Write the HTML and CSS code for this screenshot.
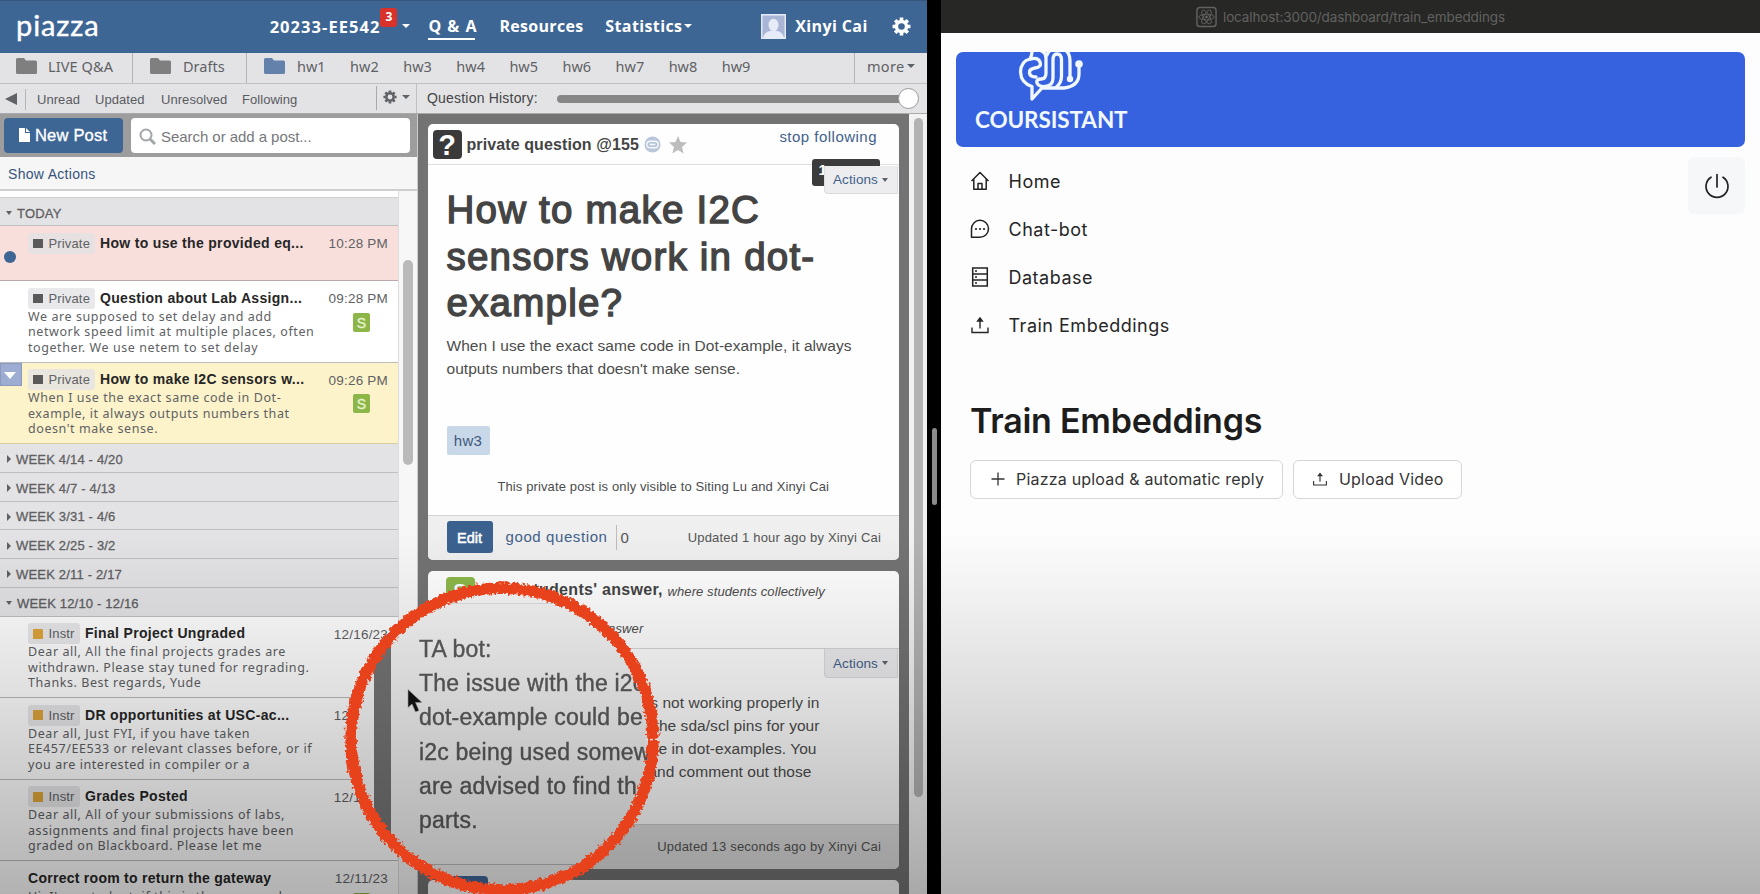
FILE: index.html
```html
<!DOCTYPE html>
<html lang="en">
<head>
<meta charset="utf-8">
<title>Piazza and Coursistant</title>
<link rel="stylesheet" href="styles.css">
</head>
<body>
<svg class="defs" width="0" height="0">
  <symbol id="folder" viewBox="0 0 21 16"><path d="M0 1.5Q0 0 1.5 0H8l2 2.5h9.500Q21 2.500 21 4v10.500Q21 16 19.500 16h-18Q0 16 0 14.500z" fill="currentColor"/></symbol>
  <symbol id="gear" viewBox="0 0 20 20"><g fill="none" stroke="currentColor"><circle cx="10" cy="10" r="5.300" stroke-width="3.600"/><path d="M10 .6v3M10 16.400v3M.6 10h3M16.400 10h3M3.350 3.350l2.200 2.200M14.450 14.450l2.200 2.200M3.350 16.650l2.200-2.200M14.450 5.550l2.200-2.200" stroke-width="3.800"/></g></symbol>
  <symbol id="upload" viewBox="0 0 20 20"><path d="M2 12.500V17.500H18V12.500M10 13.500V4M7.700 6L10 3l2.300 3z" fill="none" stroke="currentColor" stroke-width="1.400"/></symbol>
</svg>
<div class="screen">
  <section class="piazza">
    <header class="topnav">
      <span class="brand">piazza</span>
      <span class="course">20233-EE542</span><span class="badge">3</span><i class="caret c-course"></i>
      <span class="current">Q &amp; A</span>
      <span class="resources">Resources</span>
      <span class="stats">Statistics</span><i class="caret"></i>
      <svg class="avatar" viewBox="0 0 25 25"><path fill="#a9b5d6" stroke="#e4ebf6" stroke-width="1.500" d="M.7.7h23.600v23.600H.7z"/><ellipse cx="12.500" cy="11" rx="5" ry="6.300" fill="#e6ebf7"/><path d="M2 24q1-6 7-7h7q6 1 7 7z" fill="#e6ebf7"/></svg>
      <span class="user">Xinyi Cai</span>
      <svg class="topgear"><use href="#gear"/></svg>
    </header>
    <nav class="folders">
      <div class="folder live"><svg><use href="#folder"/></svg><span>LIVE Q&amp;A</span></div>
      <div class="folder drafts"><svg><use href="#folder"/></svg><span>Drafts</span></div>
      <div class="folder hw"><svg class="blue"><use href="#folder"/></svg><span>hw1</span><span>hw2</span><span>hw3</span><span>hw4</span><span>hw5</span><span>hw6</span><span>hw7</span><span>hw8</span><span>hw9</span></div>
      <div class="folder more">more<i class="caret dark"></i></div>
    </nav>
    <div class="toolbar">
      <div class="filters">
        <i class="back"></i><i class="vr"></i>
        <span class="f1">Unread</span><span class="f2">Updated</span><span class="f3">Unresolved</span><span class="f4">Following</span>
        <div class="filtergear"><svg viewBox="0 0 20 20"><use href="#gear"/></svg><i class="caret dark"></i></div>
      </div>
      <div class="history"><span>Question History:</span><div class="slider"><i></i></div></div>
    </div>
    <div class="columns">
      <aside class="feed">
        <div class="searchrow">
          <button class="newpost"><svg viewBox="0 0 11 14"><path d="M0 0h6v5h5v9H0zM7 0l4 4H7z" fill="#fff"/></svg><span>New Post</span></button>
          <div class="search"><svg viewBox="0 0 17 17"><circle cx="7" cy="7" r="5.500" fill="none" stroke="#a2a6ab" stroke-width="2"/><path d="M11 11l5 5" stroke="#a2a6ab" stroke-width="3"/></svg><span>Search or add a post...</span></div>
        </div>
        <div class="showactions"><span>Show Actions</span></div>
        <div class="listwrap">
          <div class="list">
            <div class="week today"><i class="open"></i>TODAY</div>
            <article class="post pink"><i class="unread"></i><div class="main"><div class="head"><span class="tag"><i></i>Private</span><b>How to use the provided eq...</b></div></div><div class="side"><time>10:28 PM</time></div></article>
            <article class="post"><div class="main"><div class="head"><span class="tag"><i></i>Private</span><b>Question about Lab Assign...</b></div><p>We are supposed to set delay and add<br>network speed limit at multiple places, often<br>together. We use netem to set delay</p></div><div class="side"><time>09:28 PM</time><em>S</em></div></article>
            <article class="post yellow"><i class="selected"></i><div class="main"><div class="head"><span class="tag"><i></i>Private</span><b>How to make I2C sensors w...</b></div><p>When I use the exact same code in Dot-<br>example, it always outputs numbers that<br>doesn't make sense.</p></div><div class="side"><time>09:26 PM</time><em>S</em></div></article>
            <div class="week"><i></i>WEEK 4/14 - 4/20</div>
            <div class="week"><i></i>WEEK 4/7 - 4/13</div>
            <div class="week"><i></i>WEEK 3/31 - 4/6</div>
            <div class="week"><i></i>WEEK 2/25 - 3/2</div>
            <div class="week"><i></i>WEEK 2/11 - 2/17</div>
            <div class="week last"><i class="open"></i>WEEK 12/10 - 12/16</div>
            <article class="post"><div class="main"><div class="head"><span class="tag instr"><i></i>Instr</span><b>Final Project Ungraded</b></div><p>Dear all, All the final projects grades are<br>withdrawn. Please stay tuned for regrading.<br>Thanks. Best regards, Yude</p></div><div class="side"><time>12/16/23</time></div></article>
            <article class="post"><div class="main"><div class="head"><span class="tag instr"><i></i>Instr</span><b>DR opportunities at USC-ac...</b></div><p>Dear all, Just FYI, if you have taken<br>EE457/EE533 or relevant classes before, or if<br>you are interested in compiler or a</p></div><div class="side"><time>12/15/23</time></div></article>
            <article class="post"><div class="main"><div class="head"><span class="tag instr"><i></i>Instr</span><b>Grades Posted</b></div><p>Dear all, All of your submissions of labs,<br>assignments and final projects have been<br>graded on Blackboard. Please let me</p></div><div class="side"><time>12/15/23</time></div></article>
            <article class="post"><div class="main"><div class="head"><b class="p7">Correct room to return the gateway</b></div><p>Hi, I'm a student, if this is the room and</p></div><div class="side"><time>12/11/23</time><em>S</em></div></article>
          </div>
          <div class="track"><i></i></div>
        </div>
      </aside>
      <main class="thread">
        <div class="cards">
          <section class="card question">
            <div class="qhead">
              <span class="qmark">?</span><h2>private question @155</h2>
              <svg class="link" viewBox="0 0 18 18"><circle cx="9" cy="9" r="8.500" fill="#b9c6da"/><rect x="3" y="5.500" width="12" height="7" rx="3.500" fill="none" stroke="#f4f7fb" stroke-width="1.500"/><path d="M6 9h6" stroke="#f4f7fb" stroke-width="1.500"/></svg>
              <svg class="star" viewBox="0 0 18 18"><path d="M9 0l2.500 6.100 6.500.5-5 4.300 1.600 6.500L9 13.900l-5.600 3.500L5 10.900 0 6.600l6.500-.5z" fill="#bdbdbd"/></svg>
              <a>stop following</a>
            </div>
            <span class="views">1</span>
            <div class="actions a1">Actions<i class="caret dark"></i></div>
            <h1>How to make I2C<br>sensors work in dot-<br>example?</h1>
            <p class="body">When I use the exact same code in Dot-example, it always<br>outputs numbers that doesn't make sense.</p>
            <span class="hwtag">hw3</span>
            <p class="visible">This private post is only visible to Siting Lu and Xinyi Cai</p>
            <footer><button class="edit">Edit</button><a>good question</a><span class="count">0</span><span class="updated">Updated 1 hour ago by Xinyi Cai</span></footer>
          </section>
          <section class="card answer">
            <div class="ahead"><span class="smark">S</span><h3>the students' answer,</h3><i>where students collectively</i></div>
            <div class="ahead2"><i>construct a single answer</i></div>
            <div class="actions a2">Actions<i class="caret dark"></i></div>
            <div class="abody"><div>s not working properly in</div><div>the sda/scl pins for your</div><div class="l3">re in dot-examples. You</div><div class="l4">and comment out those</div></div>
            <footer><span class="updated">Updated 13 seconds ago by Xinyi Cai</span></footer>
          </section>
          <section class="card next"></section>
        </div>
        <div class="track main"><i></i></div>
      </main>
    </div>
  </section>
  <div class="divider"><i></i></div>
  <section class="course-app">
    <div class="urlbar">
      <svg viewBox="0 0 22 22"><rect x="1" y="1" width="20" height="20" rx="3" fill="none" stroke="#626260" stroke-width="1.500"/><g fill="none" stroke="#626260"><ellipse cx="11" cy="11" rx="8" ry="3"/><ellipse cx="11" cy="11" rx="8" ry="3" transform="rotate(60 11 11)"/><ellipse cx="11" cy="11" rx="8" ry="3" transform="rotate(120 11 11)"/></g><circle cx="11" cy="11" r="1.500" fill="#626260"/></svg>
      <span>localhost:3000/dashboard/train_embeddings</span>
    </div>
    <div class="page">
      <div class="banner">
        <svg viewBox="0 0 66 50"><g fill="none" stroke="#f2f8ff" stroke-width="3.300" stroke-linecap="round" stroke-linejoin="round"><path d="M14-1Q14 4 12 7Q3 9 2.500 20Q3 31 14 34.500V47L24 36H46Q61 34 61 22V13"/><path d="M13 7Q20 5 22 10Q24 15 17 16Q11 17 11.500 21Q12 25 18 25"/><path d="M15-2Q28-3 28 6V21Q28 27 23 27Q18 27 19 31Q21 35 27 34.500Q35 34 35 26V8Q35 2 39 2Q43.500 2 43.500 8V24Q43.500 31 38 35.500"/><path d="M29 3Q31-3 39-4Q52-4 52 9V26"/></g><circle cx="61" cy="12" r="3.800" fill="#f2f8ff"/><circle cx="52" cy="27" r="3.200" fill="#f2f8ff"/></svg>
        <b>COURSISTANT</b>
      </div>
      <div class="navrow">
        <ul>
          <li><svg viewBox="0 0 20 20"><path d="M1.500 10L10 1.500 18.500 10M3.800 8v10.300H16.200V8M8 18v-5.500h4V18" fill="none" stroke="#222" stroke-width="1.500" stroke-linejoin="round"/></svg><span>Home</span></li>
          <li><svg viewBox="0 0 20 20"><path d="M1.500 18.300V10a8.500 8.500 0 1 1 8.500 8.300z" fill="none" stroke="#222" stroke-width="1.500" stroke-linejoin="round"/><g fill="#222"><circle cx="6" cy="10" r="1.100"/><circle cx="10" cy="10" r="1.100"/><circle cx="14" cy="10" r="1.100"/></g></svg><span>Chat-bot</span></li>
          <li><svg viewBox="0 0 20 20"><path d="M2.700 1h14.600v18H2.700zM2.700 7h14.600M2.700 13h14.600" fill="none" stroke="#222" stroke-width="1.500"/><g fill="#222"><circle cx="6" cy="4" r="1"/><circle cx="6" cy="10" r="1"/><circle cx="6" cy="16" r="1"/></g></svg><span>Database</span></li>
          <li><svg viewBox="0 0 20 20"><use href="#upload"/></svg><span>Train Embeddings</span></li>
        </ul>
        <button class="power"><svg viewBox="0 0 26 26"><path d="M13 1.500V14M7 4.200A11 11 0 1 0 19 4.200" fill="none" stroke="#222" stroke-width="1.700" stroke-linecap="round"/></svg></button>
      </div>
      <h1>Train Embeddings</h1>
      <div class="buttons">
        <button class="b1"><svg viewBox="0 0 14 14"><path d="M7 .5v13M.5 7h13" stroke="#333" stroke-width="1.300"/></svg><span>Piazza upload &amp; automatic reply</span></button>
        <button class="b2"><svg viewBox="0 0 20 20"><use href="#upload"/></svg><span>Upload Video</span></button>
      </div>
    </div>
  </section>

  <div class="lens">
    <i class="lensbar"></i>
    <div class="lenspage"><p>TA bot:<br>The issue with the i2c<br>dot-example could be<br>i2c being used somew<br>are advised to find th<br>parts.</p></div>
    <i class="lensbtn"></i>
  </div>
  <div class="shade"></div>
  <svg class="ring" viewBox="0 0 330 330">
    <defs><filter id="chalk" x="-5%" y="-5%" width="110%" height="110%"><feTurbulence type="fractalNoise" baseFrequency="0.3" numOctaves="2" seed="4"/><feDisplacementMap in="SourceGraphic" scale="7" xChannelSelector="R" yChannelSelector="G"/></filter></defs>
    <circle cx="166" cy="165" r="151" fill="none" stroke="#e8421c" stroke-width="11.500" filter="url(#chalk)"/>
    <path d="M309 166l16-1" stroke="#ddd" stroke-width="1.500" stroke-dasharray="3 2"/>
  </svg>
  <svg class="cursor" viewBox="0 0 16 25"><path d="M1 1v18l4-3.500 3.500 8 3.500-1.500-3.500-8H15z" fill="#111" stroke="#999" stroke-width=".6"/></svg>
</div>
</body>
</html>
```
FILE: styles.css
```css
* { box-sizing: border-box; }
body { margin: 0; overflow: hidden; font-family: "Liberation Sans", Arial, sans-serif; white-space: nowrap; }
p, h1, h2, h3, ul { margin: 0; padding: 0; }
button { border: 0; padding: 0; font: inherit; }
svg { display: block; flex: none; }
.defs { position: absolute; }
.screen { position: relative; display: flex; width: 1760px; height: 894px; overflow: hidden; background: #000; }
.caret { flex: none; width: 0; height: 0; border: 4px solid transparent; border-top: 4.500px solid #fff; border-bottom: 0; }
.caret.dark { border-top-color: #5d6269; }

.piazza { width: 927px; height: 894px; display: flex; flex-direction: column; }
.topnav { height: 53px; flex: none; background: #3e6694; border-top: 1px solid #35577e; display: flex; align-items: center; padding: 0 16px 2px 16px; color: #fff; font: bold 16px "Open Sans", "Noto Sans", sans-serif; }
.brand { font: 400 29px/30px Lato, sans-serif; width: 254px; letter-spacing: .9px; padding-bottom: 3px; -webkit-text-stroke: .4px #fff; }
.course { width: 111px; font-size: 16.500px; letter-spacing: 1.050px; }
.badge { align-self: flex-start; margin-top: 7px; width: 17px; height: 19px; border-radius: 3px; background: #d8322a; text-align: center; font-size: 12px; line-height: 18px; }
.c-course { margin: 0 18px 0 5px; }
.current { width: 47px; height: 25px; line-height: 23px; border-bottom: 2.500px solid #fff; letter-spacing: 1px; margin: 2px 24px 0 0; }
.resources { width: 106px; letter-spacing: .3px; }
.stats { width: 79px; letter-spacing: .4px; }
.avatar { width: 25px; height: 25px; margin-left: 69px; }
.user { margin-left: 9px; width: 97px; letter-spacing: .4px; }
.topgear { width: 19px; height: 19px; }
.folders { height: 31px; flex: none; display: flex; background: #e3e3e6; border-bottom: 1px solid #c0c0c3; font: 14.500px "Noto Sans", sans-serif; color: #606164; }
.folder { display: flex; align-items: center; padding-bottom: 4px; }
.folder svg { width: 21px; height: 16px; color: #7f7f7f; margin-right: 11px; }
.folder .blue { color: #6381ab; margin-right: 12px; }
.live { width: 133px; padding-left: 16px; border-right: 1px solid #b5b5b8; }
.live span { letter-spacing: .1px; }
.drafts { width: 114px; padding-left: 17px; border-right: 1px solid #b5b5b8; }
.drafts svg { margin-right: 12px; }
.hw { flex: 1; padding-left: 17px; }
.hw span { width: 53.100px; }
.more { width: 73px; border-left: 1px solid #b5b5b8; padding-left: 12px; letter-spacing: .3px; }
.more .caret { margin-left: 3px; }
.toolbar { height: 30px; flex: none; display: flex; background: #e3e3e6; border-bottom: 1px solid #a9a9ab; color: #5a5b5f; font-size: 13px; }
.filters { width: 417px; border-right: 1px solid #c0c0c3; display: flex; align-items: center; padding: 2px 0 0 5px; }
.filters span { letter-spacing: .05px; }
.back { border: 6px solid transparent; border-right: 12px solid #606267; border-left: 0; margin: -2px 8px 0 0; }
.vr { width: 1px; height: 21px; background: #b5b5b8; margin: 0 11px 0 0; }
.f1 { width: 58px; } .f2 { width: 66px; } .f3 { width: 81px; } .f4 { flex: 1; }
.filtergear { height: 24px; margin-top: -3px; width: 40px; border-left: 1px solid #a9a9ac; display: flex; align-items: center; padding: 0 0 3px 6px; gap: 5px; color: #606267; }
.filtergear svg { width: 14px; height: 14px; }
.history { flex: 1; display: flex; align-items: center; padding-left: 10px; font-size: 14px; color: #444; letter-spacing: .2px; }
.history span { width: 130px; padding-bottom: 1px; }
.slider { width: 352px; height: 8px; border-radius: 4px; background: #868686; position: relative; }
.slider i { position: absolute; right: -10px; top: -7px; width: 21px; height: 21px; border-radius: 50%; background: #fff; border: 1px solid #999; }
.columns { flex: 1; display: flex; min-height: 0; }

.feed { width: 418px; display: flex; flex-direction: column; border-right: 1px solid #ccc; }
.searchrow { height: 43px; flex: none; background: #9d9d9d; display: flex; padding: 4px; gap: 8px; }
.newpost { width: 119px; height: 35px; border-radius: 4px; background: #3e6694; color: #fff; font-size: 16.500px; display: flex; align-items: center; padding-left: 15px; gap: 5px; letter-spacing: .2px; -webkit-text-stroke: .35px #fff; }
.newpost svg { width: 11px; height: 14px; margin-top: -2px; }
.search { width: 279px; height: 35px; border-radius: 4px; background: #fff; display: flex; align-items: center; padding: 2px 0 0 8px; gap: 5px; color: #77787b; font-size: 15px; letter-spacing: -.05px; }
.search svg { width: 17px; height: 17px; }
.showactions { height: 34px; flex: none; background: #f6f6f6; border-bottom: 2px solid #cfcfcf; padding: 8px 0 0 8px; color: #36547c; font-size: 14px; line-height: 18px; letter-spacing: .3px; }
.listwrap { flex: 1; display: flex; min-height: 0; overflow: hidden; }
.list { width: 399px; border-right: 1px solid #ddd; background: #fff; padding-top: 6px; }
.track { flex: 1; background: #f7f7f7; padding: 69px 0 0 4px; }
.track i { display: block; width: 10px; height: 205px; border-radius: 5px; background: #bababa; }
.week { height: 28.750px; background: #e3e3e5; border-bottom: 1px solid #bfbfc1; display: flex; align-items: center; font-size: 13px; color: #5f6063; padding: 3px 0 0 7px; gap: 5px; -webkit-text-stroke: .3px #5f6063; letter-spacing: .18px; }
.week i { border: 4px solid transparent; border-left: 4.500px solid #5f6063; border-right: 0; }
.week i.open { border: 3.500px solid transparent; border-top: 4px solid #5f6063; border-bottom: 0; margin-left: -1px; }
.week.today { border-top: 1px solid #d0d0d0; height: 29px; }
.post { position: relative; height: 81.500px; border-bottom: 1px solid #bcbcbc; display: flex; justify-content: space-between; padding: 6.500px 10px 0 28px; background: #fff; overflow: hidden; }
.post.pink { background: #f8dfdc; height: 55px; border-color: #bba8a8; }
.post.yellow { background: #fcf3ca; border-color: #d8cf9c; }
.head { display: flex; align-items: center; height: 21px; gap: 5px; }
.tag { width: 67px; height: 21px; border-radius: 3px; background: rgba(225,226,228,.75); display: flex; align-items: center; padding-left: 5px; gap: 5.500px; font-size: 13px; letter-spacing: .15px; color: #606164; }
.tag i { width: 10px; height: 9px; background: #5a5a5a; }
.tag.instr { width: 52px; }
.tag.instr i { background: #dfa53a; height: 10px; }
.post b { font-size: 14px; color: #262626; letter-spacing: .32px; padding-bottom: 1px; }
.post b.p7 { letter-spacing: .27px; }
.post p { font: 12.500px/15.600px "Noto Sans", sans-serif; color: #606164; letter-spacing: .57px; }
.side { display: flex; flex-direction: column; align-items: flex-end; font-size: 13.500px; letter-spacing: .2px; color: #606164; padding-top: 3.500px; }
.side time { line-height: 16px; }
.side em { margin: 5.500px 18px 0 0; width: 17px; height: 19px; border-radius: 2px; background: #8cb748; color: #e8f3d4; font: 14px/20px "Liberation Sans", Arial, sans-serif; -webkit-text-stroke: .3px #e8f3d4; text-align: center; }
.unread { position: absolute; left: 4px; top: 25px; width: 12px; height: 12px; border-radius: 50%; background: #3e6694; }
.selected { position: absolute; left: 0; top: 0; width: 22px; height: 23px; background: #9dacd1; border: 1px solid #8b9ac2; }
.selected::after { content: ""; position: absolute; left: 3px; top: 8px; border: 6px solid transparent; border-top: 7px solid #fff; border-bottom: 0; }

.thread { flex: 1; display: flex; background: #737373; min-height: 0; }
.cards { width: 491px; padding: 10px 10px 0 9.500px; overflow: hidden; }
.track.main { background: #f2f2f2; padding: 4px 0 0 5px; }
.track.main i { width: 9px; height: 679px; background: #b3b3b3; }
.card { position: relative; background: #fefefe; border-radius: 5px; overflow: hidden; margin-bottom: 11px; display: flex; flex-direction: column; }
.question { height: 436px; }
.qhead { height: 41px; flex: none; border-bottom: 1px solid #e0e0e0; display: flex; align-items: center; padding: 0 22px 0 5px; }
.qmark { width: 29px; height: 29px; border-radius: 4px; background: #3a3a3a; color: #fff; font: bold 29px/30px "Liberation Sans", Arial, sans-serif; text-align: center; }
.qhead h2 { font-size: 16px; color: #444; width: 176px; margin-left: 5px; padding-top: 1px; letter-spacing: .1px; }
.star { width: 18px; height: 18px; margin: 1px 0 0; }
.link { width: 17px; height: 17px; margin: 1px 8px 0 1px; }
.qhead a { margin-left: auto; margin-top: -15px; letter-spacing: .48px; }
a { color: #41618a; font-size: 15px; }
.views { position: absolute; left: 384px; top: 35px; width: 68px; height: 27px; border-radius: 3px; background: #3c3c3c; color: #fff; font: bold 15px/22px "Liberation Sans", Arial, sans-serif; padding-left: 7px; }
.actions { position: absolute; right: 1px; width: 74px; height: 28px; background: #ededef; border: 1px solid #dcdcde; border-top: 0; border-radius: 0 0 0 4px; display: flex; align-items: center; padding: 0 0 0 8px; gap: 4px; color: #41618a; font-size: 13.500px; letter-spacing: .1px; }
.actions .caret { border-width: 4px 3.500px 0; }
.a1 { top: 42px; }
.a2 { top: 78px; height: 29px; }
.card h1 { font-size: 38.500px; line-height: 46.700px; font-weight: 400; -webkit-text-stroke: 1.400px #444; color: #444; padding: 22px 0 0 19px; letter-spacing: 1.220px; }
.body { font-size: 15.500px; line-height: 23px; color: #4c4c4c; padding: 7px 0 0 19px; letter-spacing: .05px; }
.hwtag { width: 43px; height: 29px; margin: 46px 0 0 19px; background: #c9d8e8; border-radius: 2px; color: #41597e; font-size: 15px; line-height: 29px; text-align: center; letter-spacing: .3px; }
.visible { font-size: 13px; color: #4c4c4c; text-align: center; padding-top: 24px; letter-spacing: .12px; }
.card footer { position: relative; margin-top: auto; height: 45px; background: #efefef; border-top: 1px solid #d4d4d4; display: flex; align-items: center; padding: 0 18px 2px 19px; }
.edit { width: 46px; height: 32px; border-radius: 3px; background: #3b628f; color: #fff; font-size: 14.500px; -webkit-text-stroke: .5px #fff; padding-top: 1px; }
footer a { margin-left: 13px; width: 110px; margin-top: -1px; letter-spacing: .6px; }
.count { border-left: 1px solid #bcbcbc; height: 25px; line-height: 25px; padding-left: 4px; font-size: 15px; color: #555; }
.updated { margin-left: auto; font-size: 13px; color: #555; letter-spacing: .2px; padding-top: 1px; }
.answer { height: 298px; }
.ahead { display: flex; height: 39px; align-items: center; padding-left: 18px; color: #4c4c4c; font-size: 13px; }
.ahead i { letter-spacing: .1px; padding-top: 1px; }
.smark { width: 29px; height: 28px; border-radius: 4px; background: #8cb748; color: #fff; font: bold 20px/28px "Liberation Sans", Arial, sans-serif; text-align: center; }
.ahead h3 { font-size: 16px; width: 173px; margin-left: 20px; color: #444; letter-spacing: .3px; padding-bottom: 2px; }
.ahead2 { height: 39px; border-bottom: 1px solid #d7d7d7; padding: 11px 0 0 66px; font-size: 13px; color: #4c4c4c; letter-spacing: .13px; }
.abody { padding: 43px 0 0 18px; width: 392px; font-size: 15.500px; line-height: 22.900px; color: #4c4c4c; letter-spacing: .05px; text-align: right; }
.abody .l3 { padding-right: 3px; } .abody .l4 { padding-right: 8px; }
.answer footer { background: #dedede; border-color: #ccc; }
.next { height: 60px; }

.divider { width: 14px; display: flex; justify-content: center; padding-top: 428px; }
.divider i { width: 5px; height: 77px; border-radius: 3px; background: #8b8b8b; }

.course-app { flex: 1; background: #fdfdfe; font-family: Inter, sans-serif; color: #262626; }
.urlbar { height: 33px; background: #272726; display: flex; align-items: center; padding-left: 255px; gap: 6px; color: #626260; font-size: 13.500px; letter-spacing: -.12px; }
.urlbar svg { width: 21px; height: 22px; }
.page { padding: 19px 15px 0 15px; }
.banner { height: 95px; border-radius: 7px; background: #3662e0; color: #f2f8ff; padding-left: 19px; overflow: hidden; }
.banner svg { width: 66px; height: 50px; margin-left: 43px; }
.banner b { display: block; font: 700 22.500px/28px Lato, sans-serif; margin-top: 4px; letter-spacing: -.1px; }
.navrow { display: flex; justify-content: space-between; height: 216px; padding-top: 10px; }
.navrow ul { list-style: none; padding: 0 0 0 14px; }
.navrow li { height: 48px; display: flex; align-items: center; gap: 18.500px; font-size: 18px; letter-spacing: .5px; }
.navrow li svg { width: 20px; height: 20px; }
.power { width: 57px; height: 57px; border-radius: 6px; background: #f6f7f9; display: flex; align-items: center; justify-content: center; }
.power svg { width: 26px; height: 26px; }
.page h1 { font-size: 34px; font-weight: 600; line-height: 56px; height: 56px; color: #1d1d1d; padding-left: 14px; margin-top: 30px; letter-spacing: -.25px; }
.buttons { display: flex; gap: 10px; padding: 11px 0 0 14px; }
.buttons button { height: 39px; border: 1px solid #d6d6d6; border-radius: 6px; background: #fff; display: flex; align-items: center; color: #333; font-size: 16px; letter-spacing: .2px; padding-bottom: 1px; }
.buttons .b1 { width: 313px; padding-left: 20px; gap: 11px; }
.b1 svg { width: 14px; height: 14px; }
.buttons .b2 { width: 169px; padding-left: 18px; gap: 11px; }
.b2 svg { width: 16px; height: 16px; }

.lens { position: absolute; left: 350px; top: 588px; width: 304px; height: 304px; clip-path: circle(149px at 152px 152px); background: #f8f8f8; }
.lensbar { position: absolute; left: 24px; top: 0; width: 17px; height: 304px; background: #757575; }
.lenspage { position: absolute; left: 41px; top: 15px; width: 263px; height: 262px; background: #f3f3f3; border-top: 1px solid #ddd; border-bottom: 1px solid #bbb; box-shadow: 0 -14px 0 #f6f6f6, 0 27px 0 #f0f0f0; }
.lenspage p { padding: 28px 0 0 28px; font-size: 23px; line-height: 34.200px; letter-spacing: .2px; color: #5b5b5b; -webkit-text-stroke: .4px #5b5b5b; filter: blur(.5px); }
.lensbtn { position: absolute; left: 101px; top: 288px; width: 37px; height: 16px; border-radius: 4px; background: #40679a; }
.shade { position: absolute; left: 0; top: 0; width: 1760px; height: 894px; background: linear-gradient(transparent 530px, rgba(0,0,0,.05) 600px, rgba(0,0,0,.13) 700px, rgba(0,0,0,.22) 800px, rgba(0,0,0,.3) 894px); }
.ring { position: absolute; left: 336px; top: 574px; width: 330px; height: 330px; }
.cursor { position: absolute; left: 407px; top: 688px; width: 16px; height: 26px; filter: blur(.5px); }
```
